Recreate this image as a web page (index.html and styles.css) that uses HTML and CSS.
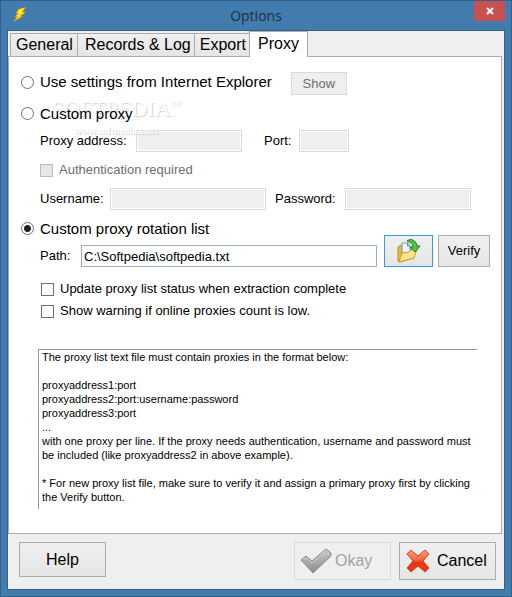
FILE: index.html
```html
<!DOCTYPE html>
<html lang="en">
<head>
  <meta charset="UTF-8" />
  <meta name="viewport" content="width=device-width, initial-scale=1" />
  <title>Options</title>
  <link rel="stylesheet" href="styles.css">
</head>
<body>
  <div class="window">
    <header class="titlebar">
      <svg class="app-icon" width="16" height="16" viewBox="0 0 16 16" aria-hidden="true">
        <path d="M6.500 2 14 0 11 4.500 14 5 9 9 11 9.500 1 15 4.500 10 2 9.500 6 7 3.500 6.500Z" fill="#f59a12" />
        <path d="M7 2.500 12.500 1 9.500 5 12 5.500 7.500 9 8.500 9.500 3.500 13 6 9.500 4 9 7.500 6.500 5 6Z" fill="#ffee14" />
      </svg>
      <h1 class="title">Options</h1>
      <button class="close" type="button" aria-label="Close">
        <svg width="8" height="8" viewBox="0 0 8 8"><path d="M1 1 7 7M7 1 1 7" stroke="#fff" stroke-width="2" /></svg>
      </button>
    </header>

    <form class="client">
      <nav class="tabs" role="tablist">
        <button class="tab" type="button" role="tab">General</button>
        <button class="tab records" type="button" role="tab">Records &amp; Log</button>
        <button class="tab export" type="button" role="tab">Export</button>
        <button class="tab active" type="button" role="tab" aria-selected="true">Proxy</button>
      </nav>

      <section class="panel" role="tabpanel">
        <div class="row row-ie">
          <label class="option"><input type="radio" name="mode" />Use settings from Internet Explorer</label>
          <button class="btn show" type="button" disabled>Show</button>
        </div>

        <div class="row row-custom">
          <label class="option"><input type="radio" name="mode" />Custom proxy</label>
          <div class="watermark" aria-hidden="true">
            <span class="wm-name">SOFTPEDIA<sup>™</sup></span>
            <span class="wm-url">www.softpedia.com</span>
          </div>
        </div>

        <div class="row sub">
          <label class="address-label" for="address">Proxy address:</label>
          <input class="field address" type="text" id="address" disabled />
          <label class="port-label" for="port">Port:</label>
          <input class="field port" type="text" id="port" disabled />
        </div>

        <div class="row sub row-auth">
          <label class="check muted"><input type="checkbox" disabled />Authentication required</label>
        </div>

        <div class="row sub">
          <label class="user-label" for="username">Username:</label>
          <input class="field username" type="text" id="username" disabled />
          <label class="pass-label" for="password">Password:</label>
          <input class="field password" type="password" id="password" disabled />
        </div>

        <div class="row row-list">
          <label class="option"><input type="radio" name="mode" checked />Custom proxy rotation list</label>
        </div>

        <div class="row sub row-path">
          <label class="path-label" for="path">Path:</label>
          <input class="field path" type="text" id="path" value="C:\Softpedia\softpedia.txt" />
          <button class="btn browse" type="button" aria-label="Browse">
            <svg width="24" height="24" viewBox="0 0 24 24">
              <path d="M1 8 4 6 6 8 17 9 17 19 3 23 1 22Z" fill="#e3bd3c" stroke="#b98f22" />
              <path d="M5 4 11 4 13 6 13 15 5 15Z" fill="#eef5ff" stroke="#6b8fc4" />
              <path d="M10.500 4 10.500 7 13 7" fill="#c6dbf6" stroke="#6b8fc4" />
              <path d="M5 14 12 13 14 11 20 10 17 19 2 23Z" fill="#fbe48a" stroke="#c9a02f" />
              <path d="M10 2C14 -1 19 1 20 7L23 7 18 13 13 8 16 8C16 4 13 3 10 2Z" fill="#4fc447" stroke="#1d7a22" />
            </svg>
          </button>
          <button class="btn verify" type="button">Verify</button>
        </div>

        <div class="checks">
          <label class="check"><input type="checkbox" />Update proxy list status when extraction complete</label>
          <label class="check"><input type="checkbox" />Show warning if online proxies count is low.</label>
        </div>

        <div class="note">
          <p>The proxy list text file must contain proxies in the format below:</p>
          <p>proxyaddress1:port<br>proxyaddress2:port:username:password<br>proxyaddress3:port<br>...<br>with one proxy per line. If the proxy needs authentication, username and password must be included (like proxyaddress2 in above example).</p>
          <p>* For new proxy list file, make sure to verify it and assign a primary proxy first by clicking the Verify button.</p>
        </div>
      </section>

      <footer class="actions">
        <button class="btn help" type="button">Help</button>
        <button class="btn action okay" type="submit" disabled>
          <svg width="32" height="26" viewBox="0 0 32 26" aria-hidden="true">
            <defs>
              <linearGradient id="grey" x1="0" y1="0" x2="0" y2="1">
                <stop offset="0" stop-color="#c8c8c8" />
                <stop offset="1" stop-color="#8c8c8c" />
              </linearGradient>
            </defs>
            <path d="M1 12 6 8 12 13 26 1 31 5 31 8 13 25Z" fill="url(#grey)" stroke="#8a8a8a" stroke-linejoin="round" />
            <path d="M3 12 6 10 12 15 26 3" fill="none" stroke="#d2d2d2" />
          </svg>
          Okay
        </button>
        <button class="btn action cancel" type="button">
          <svg width="24" height="24" viewBox="0 0 24 24" aria-hidden="true">
            <defs>
              <linearGradient id="red" x1="0" y1="0" x2="0" y2="1">
                <stop offset="0" stop-color="#ff9b76" />
                <stop offset="0.450" stop-color="#f8663c" />
                <stop offset="0.550" stop-color="#e83a12" />
                <stop offset="1" stop-color="#e8380f" />
              </linearGradient>
            </defs>
            <path d="M5 1 12 7 19 1 23 5 17 12 23 19 19 23 12 17 5 23 1 19 7 12 1 5Z" fill="url(#red)" stroke="#c9482c" stroke-linejoin="round" />
          </svg>
          Cancel
        </button>
      </footer>
    </form>
  </div>
</body>
</html>
```
FILE: styles.css
```css
* {
  box-sizing: border-box;
}

body {
  margin: 0;
  font-family: "Liberation Sans", Arial, sans-serif;
  font-size: 13px;
  line-height: 16px;
  color: #000;
}

button,
input {
  font: inherit;
  color: inherit;
  margin: 0;
}

.window {
  display: flex;
  flex-direction: column;
  min-height: 100vh;
  padding: 0 6px 6px;
  background: #427bae;
  border: 1px solid #33618c;
}

/* title bar */
.titlebar {
  display: grid;
  grid-template-columns: 1fr auto 1fr;
  height: 29px;
}

.app-icon {
  margin: 6px 0 0 5px;
}

.title {
  margin: 4px 0 0;
  font: 14px/22px "Open Sans", "Segoe UI", sans-serif;
  color: #1f2f3d;
}

.close {
  display: flex;
  align-items: center;
  justify-content: center;
  justify-self: end;
  width: 31px;
  height: 20px;
  padding: 0;
  background: #c75050;
  border: 0;
}

.client {
  flex: 1;
  display: flex;
  flex-direction: column;
  background: #efefef;
  border: 1px solid #33618c;
}

/* tabs */
.tabs {
  display: flex;
  align-items: flex-end;
  height: 26px;
  padding-left: 2px;
}

.tab {
  height: 24px;
  padding: 0 4px 0 5px;
  font-size: 16px;
  line-height: 22px;
  background: linear-gradient(#efefef, #e5e5e5);
  border: 1px solid #acacac;
  margin-right: -1px;
}

.tab.records {
  padding: 0 3px 0 7px;
}

.tab.export {
  padding: 0 3px 0 5px;
}

.tab.active {
  height: 26px;
  padding: 0 8px 2px;
  background: #fff;
  border-bottom: 0;
  z-index: 1;
}

.panel {
  flex: 1;
  display: flex;
  flex-direction: column;
  margin: -1px 2px 0 0;
  padding: 15px 11px 23px 12px;
  background: #fff;
  border: 1px solid #acacac;
}

.row {
  display: flex;
  align-items: center;
}

.row label {
  position: relative;
  z-index: 1;
}

.sub {
  padding-left: 19px;
}

.option {
  display: flex;
  align-items: center;
  gap: 6px;
  font-size: 15px;
}

.check {
  display: flex;
  align-items: center;
  gap: 6px;
}

.muted {
  color: #6d6d6d;
}

input[type="radio"],
input[type="checkbox"] {
  appearance: none;
  width: 13px;
  height: 13px;
  background: #fff;
  border: 1px solid #707070;
}

input[type="radio"] {
  border-radius: 50%;
}

input[type="radio"]:checked {
  background: radial-gradient(circle, #222 3px, #fff 4px);
}

input[type="checkbox"]:disabled {
  background: #e6e6e6;
  border-color: #bcbcbc;
}

.btn {
  padding: 0;
  background: linear-gradient(#f0f0f0, #e5e5e5);
  border: 1px solid #acacac;
}

.btn:disabled {
  background: #efefef;
  border-color: #d9d9d9;
  color: #6d6d6d;
}

.field {
  height: 22px;
  padding: 0 2px;
  background: #fff;
  border: 1px solid #9caebc;
  border-radius: 0;
}

.field:disabled {
  background: #efefef;
  border-color: #d9d9d9;
  box-shadow: inset 0 0 0 1px #fff;
}

.row-ie {
  gap: 19px;
  height: 23px;
}

.row-ie .option {
  padding-bottom: 3px;
}

.show {
  width: 56px;
  height: 23px;
}

.row-custom {
  position: relative;
  height: 35px;
  padding-top: 2px;
}

.address-label { width: 96px; }
.address { width: 106px; }
.port-label { width: 57px; padding-left: 22px; }
.port { width: 50px; }
.row-auth { height: 36px; }
.user-label { width: 70px; }
.username { width: 156px; }
.pass-label { width: 79px; padding-left: 9px; }
.password { width: 126px; }
.path-label { width: 41px; line-height: 22px; }
.path { flex: 1; min-width: 0; }

.row-list {
  height: 25px;
  padding-top: 12px;
}

.row-path {
  align-items: flex-end;
}

.browse,
.verify {
  height: 32px;
}

.browse {
  width: 49px;
  margin: 0 5px 0 7px;
  border-color: #3399ff;
  display: flex;
  align-items: center;
  justify-content: center;
}

.verify {
  width: 52px;
}

.checks {
  display: flex;
  flex-direction: column;
  gap: 6px;
  padding: 14px 0 0 20px;
}

.note {
  margin: 30px 13px 0 17px;
  padding: 0 0 5px 3px;
  font-size: 11px;
  line-height: 14px;
  border: solid #999;
  border-width: 1px 0 0 1px;
}

.note p {
  margin: 0 0 14px;
}

.note p:last-child {
  margin: 0;
}

/* watermark behind the labels */
.watermark {
  position: absolute;
  left: 31px;
  top: 2px;
  display: flex;
  flex-direction: column;
  align-items: center;
  font-family: "Liberation Serif", serif;
  color: #fff;
  text-shadow: 1px 1px 1px #c4c4c4;
  opacity: 0.8;
  pointer-events: none;
}

.wm-name {
  font-size: 22px;
  line-height: 24px;
}

.wm-name sup {
  font-size: 10px;
  line-height: 0;
}

.wm-url {
  font-size: 10px;
  font-weight: bold;
  line-height: 16px;
  margin-top: 2px;
}

/* bottom buttons */
.actions {
  display: flex;
  align-items: flex-start;
  gap: 8px;
  padding: 8px 8px 9px 11px;
  font-size: 16px;
}

.help {
  width: 87px;
  height: 35px;
  margin-right: auto;
}

.action {
  display: flex;
  align-items: center;
  width: 97px;
  height: 38px;
  padding-left: 5px;
}

.okay {
  gap: 3px;
}

.cancel {
  gap: 7px;
  padding-left: 6px;
}

.okay:disabled {
  color: #a3a3a3;
}
```
